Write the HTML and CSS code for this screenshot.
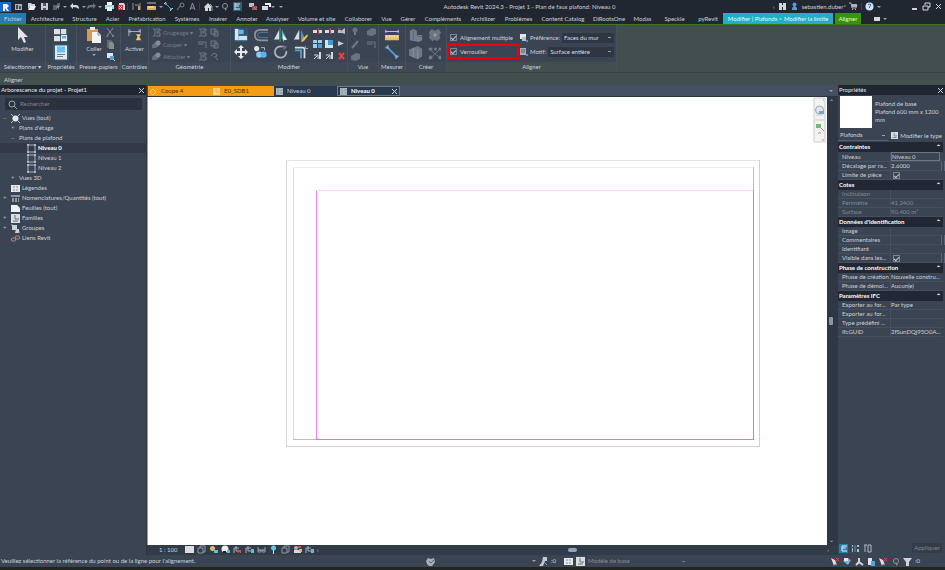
FILE: index.html
```html
<!DOCTYPE html>
<html lang="fr">
<head>
<meta charset="utf-8">
<title>Autodesk Revit 2024.3 - Projet 1</title>
<link rel="stylesheet" href="styles.css">
</head>
<body>
<svg class="defs" aria-hidden="true">
<defs>
<symbol id="logo" viewBox="0 0 12 12"><path d="M0 1h11v10H0z" fill="#1469dc"/><path d="M3 3h4l2 2-2 2 2 3H7L5 7v3H3z" fill="#f0f6ff"/></symbol>
<symbol id="home" viewBox="0 0 9 9"><path d="M1 2h7v6H1z" fill="#aab1bb"/><path d="M2 3h2v4H2zM5 4h2v3H5z" fill="#414a58"/></symbol>
<symbol id="open" viewBox="0 0 9 9"><path d="M1 1h3l1 1h3v2H3L1 7z" fill="#cdd2d8"/><path d="M3 4h6L7 8H1z" fill="#f0f1f3"/></symbol>
<symbol id="save" viewBox="0 0 9 9"><path d="M1 1h7v7H1z" fill="#c8ccd2"/><path d="M3 1h3v3H3zM3 6h3v2H3z" fill="#505967"/></symbol>
<symbol id="sync" viewBox="0 0 9 9"><path d="M1 3h4v5H1zM5 1h3v4H5z" fill="#59616d"/><path d="M4 5l3-2v4z" fill="#8b929c"/></symbol>
<symbol id="undo" viewBox="0 0 9 9"><path d="M0 4l3-3v2h3q3 0 3 4Q7 5 3 5v2z" fill="#d3dae3"/></symbol>
<symbol id="redo" viewBox="0 0 9 9"><path d="M9 4L6 1v2H3Q0 3 0 7q2-2 6-2v2z" fill="#69717d"/></symbol>
<symbol id="print" viewBox="0 0 9 9"><path d="M2 0h5v3H2z" fill="#fff"/><path d="M0 3h9v4H0z" fill="#a9d2ee"/><path d="M2 5h5v4H2z" fill="#eef3f7"/></symbol>
<symbol id="pdf" viewBox="0 0 9 9"><path d="M2 1h5l1 2v5H2z" fill="#e0d2d4"/><path d="M1 3h5v5H1z" fill="#d9323b"/><path d="M2 4l3 3M5 4L2 7" stroke="#f6d8da"/></symbol>
<symbol id="align" viewBox="0 0 9 9"><path d="M1 1v7M3 3h4M8 1v7" stroke="#8d95a0" fill="none"/><path d="M6 4h2v4H6z" fill="#d8a53a"/></symbol>
<symbol id="ruler" viewBox="0 0 9 9"><path d="M0 1h9" stroke="#b8bec6"/><path d="M0 4h9v4H0z" fill="#e0aa45"/><path d="M2 4v2M4 4v2M6 4v2" stroke="#fff0c8"/></symbol>
<symbol id="dim" viewBox="0 0 9 9"><path d="M2 2l5 5" stroke="#4ba3dc"/><path d="M0 2l2-2M6 9l3-3" stroke="#c5d4df"/><circle cx="2" cy="2" r="1" fill="#69b8e8"/><circle cx="7" cy="7" r="1" fill="#69b8e8"/></symbol>
<symbol id="tag" viewBox="0 0 9 9"><circle cx="6" cy="3" r="2" stroke="#7b838e" fill="none"/><path d="M4 4L1 8" stroke="#7b838e"/></symbol>
<symbol id="letter" viewBox="0 0 9 9"><path d="M2 8l2.500-7L7 8M3 6h3" stroke="#8a929d" fill="none"/></symbol>
<symbol id="house" viewBox="0 0 9 9"><path d="M0 5l4-4 4 4-1 1v3H5V6H4v3H1V6z" fill="#d6d8d8"/><path d="M6 2l2 2v5" stroke="#8d9cac" fill="none"/></symbol>
<symbol id="section" viewBox="0 0 9 9"><circle cx="5" cy="4" r="2.500" stroke="#8a919b" fill="none"/><path d="M5 6v3l2-2z" fill="#8a919b"/></symbol>
<symbol id="lines" viewBox="0 0 9 9"><path d="M0 0h9v9H0z" fill="#27637d"/><path d="M2 2h5M2 4h4M2 7h5M2 1v7" stroke="#dcecf4" fill="none"/></symbol>
<symbol id="browse" viewBox="0 0 9 9"><path d="M0 0h9v9H0z" fill="#2a7fae"/><path d="M8 2H3v5h5M3 4h4" stroke="#e6f4fb" fill="none"/></symbol>
<symbol id="sortlist" viewBox="0 0 9 9"><path d="M1 1h1v2H1zM1 4h1v4H1zM4 1v7M6 1h2v2H6zM6 5h2v3H6z" fill="#b4bbc5"/><path d="M4 1v7" stroke="#4c95c4"/></symbol>
<symbol id="sortcols" viewBox="0 0 9 9"><path d="M1 1h3M2 1v7M5 1h3v7H5z" stroke="#b4bbc5" fill="none"/></symbol>
<symbol id="closeviews" viewBox="0 0 9 9"><path d="M0 1h5v4H0z" fill="#b9bec5"/><path d="M3 4h5v4H3z" fill="#8a5660"/><path d="M5 5l3 3m0-3L5 8" stroke="#f05a5a"/></symbol>
<symbol id="switch" viewBox="0 0 9 9"><path d="M0 4h6v4H0z" fill="#d7dadf"/><path d="M3 1h6v4H7V3H3z" fill="#f1f2f4"/></symbol>
<symbol id="cursor" viewBox="0 0 12 16"><path d="M1 0l10 10H7l2 5-2 1-3-6-3 3z" fill="#e3e5e8"/></symbol>
<symbol id="types" viewBox="0 0 16 16"><path d="M0 1h7v6H0zM8 1h6v6H8zM0 9h7v6H0z" fill="#dcdfe3"/><path d="M8 8h7v7H8z" fill="#e8f1f7"/><path d="M9 9h5v3H9z" fill="#5cb3ea"/></symbol>
<symbol id="props" viewBox="0 0 16 16"><path d="M0 0h16v16H0z" fill="#28607d"/><path d="M2 1h12v14H2z" fill="#e7eaed"/><path d="M4 2h8v6H4z" fill="#6cc0f0"/><path d="M4 10h8M4 12h6" stroke="#707b88"/></symbol>
<symbol id="paste" viewBox="0 0 14 16"><path d="M0 2h11v12H0z" fill="#d79a50"/><path d="M3 0h5v3H3z" fill="#e8e8e8"/><path d="M5 5h6l3 3v8H5z" fill="#f0f2f4"/><path d="M11 5v3h3" stroke="#8c939c" fill="none"/></symbol>
<symbol id="cut" viewBox="0 0 9 9"><path d="M1 0l6 8M7 0L1 8" stroke="#838b96"/><circle cx="1.500" cy="8" r="1" fill="#838b96"/><circle cx="7" cy="8" r="1" fill="#838b96"/></symbol>
<symbol id="copy" viewBox="0 0 9 9"><path d="M1 0h4l2 2v6H1z" fill="#616975"/><path d="M3 2h3l2 2v5H3z" fill="#858c97"/></symbol>
<symbol id="match" viewBox="0 0 9 9"><path d="M1 1h6v5H1z" fill="#dfe8ef"/><path d="M4 4h4v4H4z" fill="#4da6df"/><path d="M7 7l2 2" stroke="#f3d083"/></symbol>
<symbol id="activate" viewBox="0 0 16 14"><path d="M1 0v8M14 0v5M1 3h13M1 3l2-2M1 3l2 2M14 3l-2-2" stroke="#b5bbc3" fill="none"/><path d="M9 6h6l-2 3 2 4H9l2-4z" fill="#f3c763"/></symbol>
<symbol id="notch" viewBox="0 0 9 9"><path d="M1 1h2v7H1M4 1h4v2H5v2h3v3H4" stroke="#747c88" fill="none"/></symbol>
<symbol id="join" viewBox="0 0 9 9"><path d="M0 5l3-3 4 1v3L4 8 0 8z" fill="#666e7a"/><circle cx="6" cy="3" r="2.500" fill="#858c96"/></symbol>
<symbol id="wall" viewBox="0 0 9 9"><path d="M1 1h5v5H1zM4 3h4v5H4z" stroke="#727a86" fill="none"/></symbol>
<symbol id="hammer" viewBox="0 0 9 9"><path d="M1 4l3-3 3 2-1 2M4 4l4 4" stroke="#727a86" fill="none"/></symbol>
<symbol id="alignbig" viewBox="0 0 16 16"><path d="M0 0h16v16H0z" fill="#28566f"/><path d="M1 1h4v13H1z" fill="#e1e5e8"/><path d="M5 2h6v5H5z" fill="#6fb4e0"/><path d="M5 9h10v5H5z" fill="#c5e2f4"/></symbol>
<symbol id="offset" viewBox="0 0 16 16"><path d="M16 2H7Q1 2 1 8t6 6h9" stroke="#8c949f" stroke-width="2" fill="none"/><path d="M16 5H8Q4 5 4 8t4 3h8" stroke="#4c84ad" fill="none"/></symbol>
<symbol id="mirror" viewBox="0 0 16 16"><path d="M6 2v11H0z" fill="#d8dde1"/><path d="M9 2l6 11H9z" fill="#67adcf"/><path d="M7 0v16" stroke="#35a55b"/><path d="M10 7l5 7-3-1-1 3z" fill="#fff"/></symbol>
<symbol id="mirrordraw" viewBox="0 0 16 16"><path d="M6 2v11H0z" fill="#d8dde1"/><path d="M8 2l5 11H8z" fill="#3d9bd3"/><path d="M15 7l-6 6-1 3 3-1 5-6z" fill="#f1b94d"/></symbol>
<symbol id="move" viewBox="0 0 14 14"><path d="M7 0l3 3H8v3h3V4l3 3-3 3V8H8v3h2l-3 3-3-3h2V8H3v2L0 7l3-3v2h3V3H4z" fill="#e6e9ec"/></symbol>
<symbol id="copyobj" viewBox="0 0 16 14"><circle cx="3" cy="3" r="3" fill="#e4e7ea"/><path d="M8 2h4v3" stroke="#bec5ce" fill="none"/><circle cx="6" cy="10" r="3.500" fill="#8bccf3"/><circle cx="11" cy="10" r="3.500" fill="#58b4ec"/></symbol>
<symbol id="rotate" viewBox="0 0 16 16"><path d="M10 2A6.500 6.500 0 1 0 14 7" stroke="#aeb5bd" stroke-width="2" fill="none"/><path d="M10 0l5 2-4 4z" fill="#65767f"/></symbol>
<symbol id="trim" viewBox="0 0 16 16"><path d="M1 3h9q2 0 2 2v10" stroke="#d9dde1" stroke-width="2" fill="none"/><path d="M1 6h7v9" stroke="#4aa4dd" stroke-width="2" fill="none"/><path d="M13 1v3h3" stroke="#7bc3ed" fill="none"/></symbol>
<symbol id="split" viewBox="0 0 9 9"><path d="M0 3h4v3H0zM6 3h3v3H6z" fill="#d9dce0"/><path d="M5 1l1 6" stroke="#e65055"/></symbol>
<symbol id="array" viewBox="0 0 9 9"><path d="M0 1h4v3H0zM5 1h4v3H5zM0 5h4v4H0z" fill="#9dd0ef"/><path d="M5 5h4v4H5z" fill="#4b9dce"/></symbol>
<symbol id="scale" viewBox="0 0 9 9"><path d="M0 1h8v8H0z" fill="#d1e3ee"/><path d="M3 1h5v5H3z" fill="#3d9ad5"/></symbol>
<symbol id="extend" viewBox="0 0 9 9"><path d="M7 1v7" stroke="#d4d8dd" stroke-width="2"/><path d="M1 8l3-3M1 4h4v4" stroke="#d4d8dd" fill="none"/></symbol>
<symbol id="pin" viewBox="0 0 9 9"><path d="M1 2l6 2.500L1 7z" fill="#c9ced4"/></symbol>
<symbol id="unpin" viewBox="0 0 9 9"><path d="M1 3h4l3-2v6L5 6H1z" fill="#b9bec6"/><path d="M1 1l4 3" stroke="#e44"/></symbol>
<symbol id="delete" viewBox="0 0 9 9"><path d="M2 2l5 6M7 2L2 8" stroke="#f23d42" stroke-width="2"/></symbol>
<symbol id="bulb" viewBox="0 0 9 9"><circle cx="4" cy="3" r="2.500" fill="#687280"/><path d="M3 5h2v3H3z" fill="#727b87"/></symbol>
<symbol id="box" viewBox="0 0 9 9"><path d="M0 4l5-3 4 1v5L5 9 0 8z" fill="#687280"/></symbol>
<symbol id="pencil" viewBox="0 0 9 9"><path d="M7 1L1 8" stroke="#707986" stroke-width="2"/></symbol>
<symbol id="hook" viewBox="0 0 9 9"><path d="M0 2h8v6M0 4h6" stroke="#707986" fill="none"/></symbol>
<symbol id="rulerbig" viewBox="0 0 16 14"><path d="M0 3h16M1 1v4M15 1v4" stroke="#cbd0d6"/><path d="M0 7h16v6H0z" fill="#eabc61"/><path d="M2 7v3M5 7v3M8 7v3M11 7v3M14 7v3" stroke="#fff2cd"/></symbol>
<symbol id="dimbig" viewBox="0 0 16 16"><path d="M3 3l10 10" stroke="#4b9fd6" stroke-width="2"/><path d="M0 4l4-4M12 16l4-4" stroke="#c5d2dc"/><circle cx="3" cy="3" r="1.500" fill="#67b9ed"/><circle cx="13" cy="13" r="1.500" fill="#67b9ed"/></symbol>
<symbol id="group" viewBox="0 0 16 16"><path d="M1 3l4-2 4 2v5h6v6l-4 2-10-2z" fill="#747d89"/><path d="M5 3v10M9 9l6 1" stroke="#59626f"/></symbol>
<symbol id="gear" viewBox="0 0 16 16"><path d="M1 5l3-4 4 2 4-2 3 4-2 3 1 4-4 3-2-2-3 2-4-4 1-3z" fill="#6b7480"/><circle cx="8" cy="8" r="2" fill="#939aa4"/></symbol>
<symbol id="cloud" viewBox="0 0 9 9"><path d="M0 4l2-3 3 1 3-1 1 4-3 4H3L1 7z" fill="#a8afb8"/><path d="M3 4l2 2 3-3" stroke="#59626f" fill="none"/></symbol>
<symbol id="parts" viewBox="0 0 16 16"><path d="M0 4l10-4 5 3v9l-5 3-10-4z" fill="#6f7884"/><path d="M5 2v11M10 4v11" stroke="#8e96a0"/></symbol>
<symbol id="nodes" viewBox="0 0 16 16"><path d="M1 2h4v3H1zM7 2h3v3H7zM12 2h3v3h-3zM1 11h4v4H1zM12 11h3v4h-3z" fill="#707985"/><path d="M3 5l9 7M12 5L5 12" stroke="#707985"/></symbol>
<symbol id="pref" viewBox="0 0 9 9"><path d="M1 1h6v5H1z" fill="#e4e7ea"/><path d="M3 4h4v4H3z" fill="#b4bdc7"/><circle cx="8" cy="8" r="1" fill="#4cb1f1"/></symbol>
<symbol id="pattern" viewBox="0 0 9 9"><path d="M1 1h6v7H1z" fill="#a6adb6"/><path d="M2 3h4M2 5h4" stroke="#596270"/><circle cx="8" cy="8" r="1" fill="#4cb1f1"/></symbol>
<symbol id="find" viewBox="0 0 9 9"><path d="M1 1h3v2h1V1h3v7H5V5H4v3H1z" fill="#d1d4d9"/></symbol>
<symbol id="user" viewBox="0 0 9 9"><circle cx="4.500" cy="2.500" r="2" fill="#5597e8"/><path d="M4 4h1l2 2v2H2V6z" fill="#5597e8"/></symbol>
<symbol id="cart" viewBox="0 0 9 9"><path d="M0 1h2l1 5h4l1-3H3" stroke="#a9b3c1" fill="none"/><path d="M3 2h5L7 5H3z" fill="#a9b3c1"/><path d="M3 7h1v1H3zM6 7h1v1H6z" fill="#a9b3c1"/></symbol>
<symbol id="help" viewBox="0 0 9 9"><circle cx="4.500" cy="4.500" r="4" fill="#d2e3f7"/><path d="M3 3q1-2 3 0L4.500 5v1" stroke="#246bb6" fill="none"/></symbol>
<symbol id="min" viewBox="0 0 9 9"><path d="M2 7h5" stroke="#cdd1d7" stroke-width="2"/></symbol>
<symbol id="restore" viewBox="0 0 9 9"><path d="M1 4h5v4H1zM3 3V1h5v4H6" stroke="#d5d8dc" fill="none"/></symbol>
<symbol id="close" viewBox="0 0 9 9"><path d="M2 2l5 5M7 2L2 7" stroke="#ced3da"/></symbol>
<symbol id="mag" viewBox="0 0 9 9"><circle cx="4" cy="4" r="3" stroke="#9ca5b0" fill="none"/><path d="M6 6l3 3" stroke="#9ca5b0"/></symbol>
<symbol id="views" viewBox="0 0 9 9"><circle cx="4.500" cy="4.500" r="3" fill="#e6e9ec"/><path d="M0 0l2 2M9 0L7 2M0 9l2-2M9 9L7 7" stroke="#b9c0c8"/></symbol>
<symbol id="plan" viewBox="0 0 9 9"><path d="M1 1h7v7H1z" stroke="#adb4bd" fill="none"/><path d="M0 0h2v2H0zM7 0h2v2H7zM0 7h2v2H0zM7 7h2v2H7z" fill="#adb4bd"/></symbol>
<symbol id="legend" viewBox="0 0 9 9"><path d="M0 1h9v7H0z" fill="#e6e8ea"/><path d="M2 3h2M5 3h2M2 6h2M5 6h2" stroke="#87909b"/></symbol>
<symbol id="table" viewBox="0 0 9 9"><path d="M0 1h9v2H0zM1 4h2v4H1zM4 4h2v4H4zM7 4h1v4H7z" fill="#8f98a4"/></symbol>
<symbol id="sheet" viewBox="0 0 9 9"><path d="M0 1h6l3 3v4H0z" fill="#f0f1f2"/></symbol>
<symbol id="family" viewBox="0 0 9 9"><path d="M0 0h9v9H0z" fill="#d9dce0"/><path d="M4 1v4h4M2 7h5" stroke="#66717e" fill="none"/></symbol>
<symbol id="groups" viewBox="0 0 9 9"><path d="M1 1h5v5H1zM5 5h3v4H4z" fill="#ced2d7"/><path d="M0 0h2M0 0v2M9 9H7M9 9V7" stroke="#909aa5" fill="none"/></symbol>
<symbol id="link" viewBox="0 0 9 9"><rect x="0.500" y="4" width="4" height="3" rx="1" stroke="#bd8b6c" fill="none"/><rect x="4.500" y="2" width="4" height="3" rx="1" stroke="#bd8b6c" fill="none"/></symbol>
<symbol id="tabicon" viewBox="0 0 9 9"><path d="M1 1h7v7H1z" fill="#aeb8bf"/><path d="M3 1v7M5 3h3M5 6h3" stroke="#8a96a1"/></symbol>
<symbol id="tabhouse" viewBox="0 0 9 9"><path d="M1 5l3-3 3 3-3 3z" stroke="#f8c76f" fill="none"/></symbol>
<symbol id="tabsheet" viewBox="0 0 9 9"><path d="M1 1h7v7H1z" fill="#f7cf86"/><path d="M4 1v4h4" stroke="#f4b44d" fill="none"/></symbol>
<symbol id="scalesheet" viewBox="0 0 9 9"><path d="M0 1h9v7H0z" fill="#dbdddf"/></symbol>
<symbol id="detail" viewBox="0 0 9 9"><path d="M1 3h5v5H1zM3 3V1h5v6H6" stroke="#8f98a4" fill="none"/></symbol>
<symbol id="sun" viewBox="0 0 9 9"><circle cx="3.500" cy="3.500" r="2.500" fill="#e4b867"/><path d="M5 5h4v3H5z" fill="#55c2db"/></symbol>
<symbol id="shadow" viewBox="0 0 9 9"><circle cx="4" cy="4" r="3.500" fill="#eef0f0"/><path d="M2 6h3v2H2z" fill="#1c2027"/><path d="M6 5h3v3H6z" fill="#55c2db"/></symbol>
<symbol id="cropred" viewBox="0 0 9 9"><path d="M1 8V3h5M3 1v5h5" stroke="#a9b0b9" fill="none"/><path d="M5 5l3 3M8 5L5 8" stroke="#e24a50"/></symbol>
<symbol id="cropcyan" viewBox="0 0 9 9"><path d="M1 8V3h5M3 1v5h5" stroke="#a9b0b9" fill="none"/><path d="M6 4h3v4H6z" fill="#55c2db"/></symbol>
<symbol id="glasses" viewBox="0 0 9 9"><path d="M1 2v3h7V2M1 5h3v2H1zM5 5h3v2H5z" stroke="#8f98a4" fill="none"/></symbol>
<symbol id="lamp" viewBox="0 0 9 9"><circle cx="4.500" cy="3" r="2.500" fill="#55d1e6"/><path d="M4 5h1v4H4z" fill="#ddd"/></symbol>
<symbol id="worker" viewBox="0 0 9 9"><circle cx="3" cy="3" r="2" fill="#a8b0ba"/><path d="M1 5h7v3H1z" fill="#d7dade"/><path d="M6 4h3v3H6z" fill="#e4b867"/><path d="M5 1h3v2H5z" fill="#c6555f"/></symbol>
<symbol id="filter" viewBox="0 0 9 9"><path d="M0 1h9L6 5v4H3V5z" fill="#d0d3d7"/></symbol>
<symbol id="selred" viewBox="0 0 9 9"><path d="M0 1l4 2 2 5-2-1-1 2z" fill="#d8dbdf"/><path d="M5 1l3 3M8 1L5 4" stroke="#e34b53"/></symbol>
<symbol id="selblue" viewBox="0 0 9 9"><path d="M0 4l4-3 4 2-3 5z" fill="#68b6e6"/><path d="M1 1h4v3H1z" fill="#e3e6e9"/><path d="M5 1l3 3" stroke="#e34b53"/></symbol>
<symbol id="selgrey" viewBox="0 0 9 9"><path d="M4 1v4L1 8M4 5l4 3" stroke="#d1d5da" stroke-width="2" fill="none"/></symbol>
<symbol id="workset" viewBox="0 0 9 9"><path d="M4 0h4v4H6L4 9H0l3-4z" fill="#c3c8ce"/><path d="M5 5l3 3" stroke="#8c949e"/></symbol>
<symbol id="selbox" viewBox="0 0 9 9"><path d="M1 1h4v7H1z" fill="#e0e4e8"/><path d="M4 4h4v5H4z" fill="#52a7de"/></symbol>
</defs>
</svg>
<div class="app">
<header class="titlebar">
<nav class="quick" aria-label="Accès rapide">
<button aria-label="Revit" class="logo"><svg><use href="#logo"/></svg></button>
<button aria-label="Accueil"><svg><use href="#home"/></svg></button>
<button aria-label="Ouvrir"><svg><use href="#open"/></svg></button>
<button aria-label="Enregistrer"><svg><use href="#save"/></svg></button>
<button aria-label="Synchroniser"><svg><use href="#sync"/></svg></button>
<i class="caret"></i>
<button aria-label="Annuler"><svg><use href="#undo"/></svg></button>
<i class="caret"></i>
<button aria-label="Rétablir"><svg><use href="#redo"/></svg></button>
<i class="caret"></i>
<button aria-label="Imprimer"><svg><use href="#print"/></svg></button>
<button aria-label="PDF"><svg><use href="#pdf"/></svg></button>
<i class="sep"></i>
<button aria-label="Alignement"><svg><use href="#align"/></svg></button>
<button aria-label="Mesurer"><svg><use href="#ruler"/></svg></button>
<i class="caret"></i>
<button aria-label="Cote alignée"><svg><use href="#dim"/></svg></button>
<button aria-label="Étiquette"><svg><use href="#tag"/></svg></button>
<button aria-label="Texte"><svg><use href="#letter"/></svg></button>
<i class="sep"></i>
<button aria-label="Vue 3D"><svg><use href="#house"/></svg></button>
<i class="caret"></i>
<button aria-label="Coupe"><svg><use href="#section"/></svg></button>
<button aria-label="Lignes fines"><svg><use href="#lines"/></svg></button>
<button aria-label="Fermer les vues"><svg><use href="#closeviews"/></svg></button>
<button aria-label="Changer de fenêtre"><svg><use href="#switch"/></svg></button>
<i class="caret"></i>
<i class="caret"></i>
</nav>
<h1>Autodesk Revit 2024.3 - Projet 1 - Plan de faux plafond: Niveau 0</h1>
<div class="account">
<i class="back">‹</i>
<button aria-label="Rechercher"><svg><use href="#find"/></svg></button>
<button class="username"><svg><use href="#user"/></svg>sebastien.duber*</button>
<button aria-label="Boutique"><svg><use href="#cart"/></svg></button>
<i class="sep"></i>
<button aria-label="Aide"><svg><use href="#help"/></svg></button>
<i class="caret"></i>
</div>
<div class="window">
<button aria-label="Réduire"><svg><use href="#min"/></svg></button>
<button aria-label="Restaurer"><svg><use href="#restore"/></svg></button>
<button aria-label="Fermer"><svg><use href="#close"/></svg></button>
</div>
</header>
<nav class="tabs" aria-label="Ruban">
<button class="file">Fichier</button>
<button>Architecture</button><button>Structure</button><button>Acier</button><button>Préfabrication</button><button>Systèmes</button><button>Insérer</button><button>Annoter</button><button>Analyser</button><button>Volume et site</button><button>Collaborer</button><button>Vue</button><button>Gérer</button><button>Compléments</button><button>Archilizer</button><button>Problèmes</button><button>Content Catalog</button><button>DiRootsOne</button><button>Modas</button><button>Speckle</button><button>pyRevit</button>
<button class="context">Modifier | Plafonds &gt; Modifier la limite</button>
<button class="current">Aligner</button>
<button class="display" aria-label="Affichage du ruban"><i class="lozenge"></i><i class="caret"></i></button>
</nav>
<section class="ribbon">
<div class="panel select"><div class="tools"><button class="big"><svg class="arrow"><use href="#cursor"/></svg>Modifier</button></div><h2>Sélectionner ▾</h2></div>
<div class="panel properties"><div class="tools column"><button aria-label="Type"><svg class="s16"><use href="#types"/></svg></button><button aria-label="Propriétés"><svg class="s18"><use href="#props"/></svg></button></div><h2>Propriétés</h2></div>
<div class="panel clipboard"><div class="tools"><button class="big"><svg class="s16"><use href="#paste"/></svg>Coller<i class="caret"></i></button><div class="stack"><svg><use href="#cut"/></svg><svg><use href="#copy"/></svg><svg><use href="#match"/></svg></div></div><h2>Presse-papiers</h2></div>
<div class="panel controls"><div class="tools"><button class="big"><svg class="s16"><use href="#activate"/></svg>Activer</button></div><h2>Contrôles</h2></div>
<div class="panel geometry"><div class="tools geo">
<button class="dim"><svg><use href="#notch"/></svg>Grugeage ▾</button><svg><use href="#notch"/></svg><svg><use href="#wall"/></svg>
<button class="dim"><svg><use href="#join"/></svg>Couper ▾</button><svg><use href="#hook"/></svg><svg><use href="#wall"/></svg>
<button class="dim"><svg><use href="#join"/></svg>Attacher ▾</button><svg><use href="#notch"/></svg><svg><use href="#hammer"/></svg>
</div><h2>Géométrie</h2></div>
<div class="panel modify"><div class="tools">
<div class="quad">
<svg class="s16"><use href="#alignbig"/></svg><svg class="s16"><use href="#offset"/></svg><svg class="s16"><use href="#mirror"/></svg><svg class="s16"><use href="#mirrordraw"/></svg>
<svg class="s16"><use href="#move"/></svg><svg class="s16"><use href="#copyobj"/></svg><svg class="s16"><use href="#rotate"/></svg><svg class="s16"><use href="#trim"/></svg>
</div>
<div class="nine">
<svg><use href="#split"/></svg><svg><use href="#split"/></svg><svg><use href="#unpin"/></svg>
<svg><use href="#array"/></svg><svg><use href="#scale"/></svg><svg><use href="#pin"/></svg>
<svg><use href="#extend"/></svg><svg><use href="#extend"/></svg><svg><use href="#delete"/></svg>
</div></div><h2>Modifier</h2></div>
<div class="panel view"><div class="tools six"><svg><use href="#bulb"/></svg><svg><use href="#box"/></svg><svg><use href="#pencil"/></svg><svg><use href="#hook"/></svg><svg><use href="#box"/></svg></div><h2>Vue</h2></div>
<div class="panel measure"><div class="tools column"><svg class="s16"><use href="#rulerbig"/></svg><svg class="s16"><use href="#dimbig"/></svg></div><h2>Mesurer</h2></div>
<div class="panel create"><div class="tools four"><svg class="s16"><use href="#group"/></svg><svg class="s16"><use href="#gear"/></svg><svg class="s16"><use href="#parts"/></svg><svg class="s16"><use href="#nodes"/></svg></div><h2>Créer</h2></div>
<div class="panel alignment"><div class="tools options">
<label class="check"><input type="checkbox" checked>Alignement multiple</label>
<div class="choice"><svg><use href="#pref"/></svg><label for="pref">Préférence:</label><select id="pref"><option>Faces du mur</option></select></div>
<label class="check marked"><input type="checkbox" checked>Verrouiller</label>
<div class="choice"><svg><use href="#pattern"/></svg><label for="motif">Motif:</label><select id="motif"><option>Surface entière</option></select></div>
</div><h2>Aligner</h2></div>
</section>
<div class="optionsbar">Aligner</div>
<main class="work">
<aside class="browser">
<div class="dockhead"><span>Arborescence du projet - Projet1</span><button aria-label="Fermer"><svg><use href="#close"/></svg></button></div>
<label class="search"><svg><use href="#mag"/></svg><input type="search" placeholder="Rechercher" aria-label="Rechercher"></label>
<ul class="tree">
<li><i>−</i><svg><use href="#views"/></svg>Vues (tout)</li>
<li class="l2"><i>+</i>Plans d'étage</li>
<li class="l2"><i>−</i>Plans de plafond</li>
<li class="l3 active"><svg><use href="#plan"/></svg>Niveau 0</li>
<li class="l3"><svg><use href="#plan"/></svg>Niveau 1</li>
<li class="l3"><svg><use href="#plan"/></svg>Niveau 2</li>
<li class="l2"><i>+</i>Vues 3D</li>
<li><i></i><svg><use href="#legend"/></svg>Légendes</li>
<li><i>+</i><svg><use href="#table"/></svg>Nomenclatures/Quantités (tout)</li>
<li><i></i><svg><use href="#sheet"/></svg>Feuilles (tout)</li>
<li><i>+</i><svg><use href="#family"/></svg>Familles</li>
<li><i>+</i><svg><use href="#groups"/></svg>Groupes</li>
<li><i></i><svg><use href="#link"/></svg>Liens Revit</li>
</ul>
</aside>
<section class="center">
<nav class="docs" aria-label="Vues ouvertes">
<button class="orange"><svg><use href="#tabhouse"/></svg>Coupe 4</button><button class="orange"><svg><use href="#tabsheet"/></svg>E0_SDB1</button><button><svg><use href="#tabicon"/></svg>Niveau 0</button><button class="open"><svg><use href="#tabicon"/></svg><b>Niveau 0</b><svg class="x"><use href="#close"/></svg></button>
<i class="caret"></i>
</nav>
<div class="viewport">
<div class="canvas">
<svg class="drawing" viewBox="0 0 679 448" fill="none" shape-rendering="crispEdges">
<path d="M138.500 63v287" stroke="#d6d6d6"/><path d="M138 63.500h474" stroke="#e4e4e4"/><path d="M611.500 63v287M138 349.500h474" stroke="#d0d0d0"/>
<path d="M145.500 70v273" stroke="#dcdcdc"/><path d="M145 70.500h461" stroke="#ececec"/><path d="M605.500 70v23M145 342.500h24" stroke="#bdbdbd"/>
<path d="M168.500 93v250" stroke="#ff7cff"/><path d="M168 93.500h437" stroke="#ffd4ff"/><path d="M605.500 93v250M168 342.500h438" stroke="#ff5cff"/>
</svg>
<div class="navbar"><svg viewBox="0 0 13 46"><path d="M1 1h11v44H1z" fill="#f3f3f3" stroke="#ccc"/><circle cx="6.500" cy="13" r="4" fill="#dfe7ed" stroke="#9da8b3"/><path d="M6 14h5v3H6z" fill="#78a3cf"/><path d="M3 18h7M2 23h9" stroke="#c9c9c9"/><path d="M3 27h5v4H3z" fill="#79b978"/><path d="M8 31l3 3" stroke="#8b949d"/><path d="M5 36h3M9 43h2M10 3h1" stroke="#999"/></svg></div>
</div>
<div class="vscroll"><i>⌃</i><span></span><i>⌄</i></div>
</div>
<div class="viewbar"><span class="scale">1 : 100</span>
<div class="viewicons"><svg><use href="#scalesheet"/></svg><svg><use href="#detail"/></svg><svg><use href="#sun"/></svg><svg><use href="#shadow"/></svg><svg><use href="#cropred"/></svg><svg><use href="#cropcyan"/></svg><svg><use href="#glasses"/></svg><svg><use href="#lamp"/></svg><svg><use href="#detail"/></svg><svg><use href="#worker"/></svg><svg><use href="#cropcyan"/></svg><i>‹</i></div>
<div class="hscroll"><span></span></div><i class="end">›</i></div>
</section>
<aside class="props">
<div class="dockhead"><span>Propriétés</span><button aria-label="Fermer"><svg><use href="#close"/></svg></button></div>
<div class="typebox"><div class="thumb"></div><p>Plafond de base<br>Plafond 600 mm x 1200 mm</p></div>
<div class="typeline"><select aria-label="Catégorie"><option>Plafonds</option></select><button><svg><use href="#family"/></svg>Modifier le type</button></div>
<table>
<tbody>
<tr class="group"><th colspan="2">Contraintes<i>⌃</i></th></tr>
<tr><th>Niveau</th><td><span class="field">Niveau 0</span></td></tr>
<tr><th>Décalage par ra...</th><td class="more">2.6000</td></tr>
<tr><th>Limite de pièce</th><td><input type="checkbox" checked aria-label="Limite de pièce"></td></tr>
<tr class="group"><th colspan="2">Cotes<i>⌃</i></th></tr>
<tr class="off"><th>Inclinaison</th><td></td></tr>
<tr class="off"><th>Périmètre</th><td>41.2400</td></tr>
<tr class="off"><th>Surface</th><td>90.400 m²</td></tr>
<tr class="group"><th colspan="2">Données d'identification<i>⌃</i></th></tr>
<tr><th>Image</th><td></td></tr>
<tr><th>Commentaires</th><td class="more"></td></tr>
<tr><th>Identifiant</th><td></td></tr>
<tr><th>Visible dans les...</th><td class="more"><input type="checkbox" checked aria-label="Visible dans les"></td></tr>
<tr class="group"><th colspan="2">Phase de construction<i>⌃</i></th></tr>
<tr><th>Phase de création</th><td>Nouvelle constru...</td></tr>
<tr><th>Phase de démol...</th><td>Aucun(e)</td></tr>
<tr class="group"><th colspan="2">Paramètres IFC<i>⌃</i></th></tr>
<tr><th>Exporter au for...</th><td>Par type</td></tr>
<tr><th>Exporter au for...</th><td></td></tr>
<tr><th>Type prédéfini ...</th><td></td></tr>
<tr><th>IfcGUID</th><td>2fSunDQj95O0A...</td></tr>
</tbody>
</table>
<div class="propfoot"><svg><use href="#browse"/></svg><svg><use href="#sortlist"/></svg><svg><use href="#sortcols"/></svg><button disabled>Appliquer</button></div>
</aside>
</main>
<footer class="status">
<span class="hint">Veuillez sélectionner la référence du point ou de la ligne pour l'alignement.</span>
<svg class="sync"><use href="#cloud"/></svg>
<div class="worksets"><i class="caret"></i><svg><use href="#workset"/></svg><span class="count">:0</span><svg><use href="#legend"/></svg><svg><use href="#family"/></svg><select aria-label="Variante"><option>Modèle de base</option></select></div>
<div class="filters"><svg><use href="#selred"/></svg><svg><use href="#selblue"/></svg><svg><use href="#selgrey"/></svg><svg><use href="#selbox"/></svg><svg><use href="#selred"/></svg><svg><use href="#section"/></svg><svg><use href="#filter"/></svg><span>:0</span></div>
</footer>
</div>
</body>
</html>
```
FILE: styles.css
```css
* { box-sizing: border-box; }
body { margin: 0; background: #22261f; color: #cdd2d9; font: 6px/10px Lato, "Open Sans", sans-serif; }
.defs { position: absolute; width: 0; height: 0; }
svg { width: 9px; height: 9px; display: block; flex: none; }
.s16 { width: 14px; height: 16px; }
.s18 { width: 16px; height: 17px; }
button, input, select { font: inherit; color: inherit; background: none; border: 0; padding: 0; margin: 0; }
button { display: flex; align-items: center; justify-content: center; white-space: nowrap; }
select { appearance: none; }
i { font-style: normal; }
h1, h2, p, ul { margin: 0; padding: 0; font: inherit; }
input[type="checkbox"] { appearance: none; display: grid; place-items: center; width: 7px; height: 7px; flex: none; border: 1px solid #7c8591; }
input[type="checkbox"]::before { content: ""; width: 4px; height: 2px; border: solid #c5cad1; border-width: 0 0 1px 1px; transform: rotate(-45deg); }
.caret { display: block; justify-self: center; border: 2px solid transparent; border-top-color: #9aa1ab; border-bottom: 0; }
.sep { width: 1px; height: 7px; background: #3a424e; justify-self: center; }

.app { display: flex; flex-direction: column; min-height: 100vh; padding-bottom: 3px; }
.titlebar { display: flex; align-items: center; height: 13px; background: #212731; }
.quick { display: grid; align-items: center; height: 13px; grid-template-columns: 12px 13px 13px 12px 12px 5px 15px 3px 13px 3px 16px 8px 4px 14px 16px 3px 13px 11px 12px 3px 14px 4px 11px 14px 18px 8px 6px 10px; }
.logo svg { width: 12px; height: 12px; }
.titlebar h1 { flex: 1; text-align: center; white-space: nowrap; }
.account, .window { display: flex; align-items: center; }
.account { gap: 3px; padding-right: 29px; }
.username { gap: 3px; }
.window { gap: 3px; padding-right: 2px; }

.tabs { display: grid; height: 12px; background: #212731; border-bottom: 1px solid #387a1e; grid-template-columns: 26px 42px 33px 23px 46px 34px 28px 30px 31px 47px 37px 19px 24px 46px 34px 37px 52px 40px 27px 37px 30px 110px 2px 26px 1fr; }
.file { background: #2779b1; }
.context { background: #1eb0c4; color: #e4fbff; }
.tabs .current { grid-column: 24; background: #389309; color: #e8f7dc; }
.tabs .display { justify-content: flex-start; gap: 3px; padding-left: 13px; }
.lozenge { width: 6px; height: 4px; background: #d7dade; }

.ribbon { display: flex; height: 47px; background: #434f4f; }
.panel { display: flex; flex-direction: column; background: #3b4453; border-right: 1px solid #465060; flex: none; }
.panel h2 { height: 10px; text-align: center; background: #3f4856; white-space: nowrap; }
.tools { display: flex; flex: 1; justify-content: center; align-items: flex-start; padding-top: 2px; }
.tools.column { flex-direction: column; align-items: center; justify-content: flex-start; gap: 1px; }
.big { flex-direction: column; line-height: 10px; }
.big svg { margin-bottom: 1px; }
.arrow { width: 12px; height: 16px; }
.select { width: 46px; }
.properties { width: 31px; }
.clipboard { width: 44px; }
.clipboard .tools { gap: 4px; padding-left: 4px; }
.stack { display: grid; gap: 3px; padding-top: 1px; }
.controls { width: 28px; }
.geometry { width: 82px; }
.geo { display: grid; grid-template-columns: 46px 12px 12px; gap: 3px 0; justify-content: start; align-content: start; padding: 3px 0 0 3px; }
.dim { justify-content: flex-start; gap: 2px; color: #747d89; line-height: 9px; }
.modify { width: 117px; }
.quad { display: grid; grid-template-columns: repeat(4, 20px); justify-items: center; gap: 1px 0; }
.nine { display: grid; grid-template-columns: repeat(3, 12px); justify-items: center; gap: 3px 0; }
.view { width: 31px; }
.six { display: grid; grid-template-columns: 9px 9px; gap: 3px 7px; }
.measure { width: 27px; }
.create { width: 41px; }
.four { display: grid; grid-template-columns: 16px 16px; gap: 2px 3px; align-content: start; }
.alignment { width: 170px; }
.alignment h2 { background: #434f4f; }
.options { display: grid; grid-template-columns: 72px 1fr; grid-template-rows: 13px 15px; align-items: center; align-content: start; padding: 6px 2px 0 0; }
.check { display: flex; align-items: center; gap: 3px; height: 100%; padding-left: 3px; white-space: nowrap; overflow: hidden; }
.marked { border: 2px solid #f00000; padding-left: 1px; }
.choice { display: flex; align-items: center; gap: 2px; white-space: nowrap; }
.choice select { flex: 1; min-width: 0; height: 10px; padding: 0 2px; color: #d9dde2; background: #2e3643 linear-gradient(#9aa1ab, #9aa1ab) no-repeat right 3px center / 3px 1px; }
.optionsbar { height: 13px; padding: 2px 4px; background: #434f4f; border-top: 1px solid #364044; }

.work { display: grid; grid-template-columns: 147px 1fr 107px; flex: 1; min-height: 0; background: #3b4453; }
.dockhead { display: flex; justify-content: space-between; align-items: center; height: 10px; padding-left: 1px; background: #202733; color: #e4e7eb; white-space: nowrap; }
.browser { border-right: 1px solid #2c3441; }
.search { display: flex; align-items: center; gap: 3px; height: 12px; margin: 3px 4px 0 5px; padding-left: 3px; background: #2b323e; }
.search input { width: 100%; }
.search input::placeholder { color: #7e8793; }
.tree { list-style: none; margin-top: 3px; }
.tree li { display: flex; align-items: center; gap: 2px; height: 10px; padding-left: 3px; white-space: nowrap; }
.tree i { width: 6px; color: #a9b0b9; }
.tree .l2 { padding-left: 11px; }
.tree .l3 { padding-left: 27px; }
.tree .active { background: #323a47; color: #fff; font-weight: bold; }

.center { display: flex; flex-direction: column; min-width: 0; background: #2f3744; }
.docs { display: flex; align-items: center; height: 12px; background: #454f62; border-bottom: 1px solid #2c3441; padding: 1px 5px 0 1px; }
.docs button { width: 63px; height: 10px; gap: 3px; padding-left: 1px; justify-content: flex-start; background: #293a4e; }
.docs .orange { background: #f49c13; color: #46300a; }
.docs .open { border: 1px solid #65798d; color: #fff; }
.docs .x { margin-left: auto; }
.docs > .caret { margin-left: auto; }
.viewport { display: flex; flex: 1; min-height: 0; }
.canvas { position: relative; flex: 1; background: #fff; border-left: 1px solid #99a1ab; }
.drawing { width: 100%; height: 100%; }
.navbar { position: absolute; top: 0; right: 1px; }
.navbar svg { width: 13px; height: 46px; }
.vscroll { display: flex; flex-direction: column; align-items: center; justify-content: space-between; width: 11px; padding-right: 3px; background: #2f3744; }
.vscroll span { width: 4px; height: 8px; border-radius: 1px; background: #8797ad; }
.viewbar { display: flex; align-items: center; height: 10px; padding: 0 9px 0 12px; background: #323b48; }
.scale { width: 26px; }
.viewicons { display: flex; gap: 3px; }
.hscroll { flex: 1; display: flex; justify-content: center; }
.hscroll span { width: 9px; height: 4px; border-radius: 2px; background: #8fa3bb; }

.props { display: flex; flex-direction: column; min-width: 0; }
.typebox { display: flex; gap: 3px; padding: 1px 2px 2px; line-height: 8px; }
.typebox p { padding-top: 4px; }
.thumb { width: 32px; height: 32px; background: #fff; flex: none; }
.typeline { display: flex; justify-content: space-between; height: 11px; margin-bottom: 1px; padding-right: 3px; }
.typeline select { width: 50px; padding-left: 2px; border-bottom: 1px solid #566070; background: linear-gradient(#9aa1ab, #9aa1ab) no-repeat right 3px center / 3px 1px; }
.typeline button { gap: 2px; }
.typeline svg { width: 7px; height: 7px; }
table { width: 100%; table-layout: fixed; border-collapse: collapse; line-height: 8px; }
tr { height: 9px; }
th, td { overflow: hidden; height: 9px; padding: 0; text-align: left; font-weight: normal; white-space: nowrap; border-bottom: 1px solid #465060; }
th { padding-left: 4px; }
td { border-left: 1px solid #465060; }
.field { display: block; width: 49px; border: 1px solid #6d7683; line-height: 7px; }
.group th { height: 10px; padding-left: 1px; background: #212833; color: #fff; font-weight: bold; border: 0; }
.group i { float: right; padding-right: 2px; }
.off { color: #818995; }
td input { margin-left: 2px; }
.more { border-right: 4px double #596576; }
.propfoot { display: flex; align-items: center; gap: 3px; height: 14px; margin-top: auto; padding: 0 3px 0 1px; }
.propfoot button { width: 30px; margin-left: auto; color: #7b8490; background: #343c49; }

.status { display: grid; grid-template-columns: 425px 106px 1fr 114px; align-items: center; height: 12px; padding-left: 1px; background: #3b4453; }
.status .sync { width: 9px; height: 9px; }
.worksets, .filters { display: flex; align-items: center; gap: 3px; }
.worksets .count { width: 10px; }
.worksets select { width: 100px; color: #858e99; background: linear-gradient(#6f7884, #6f7884) no-repeat right 3px center / 3px 1px; }
```
